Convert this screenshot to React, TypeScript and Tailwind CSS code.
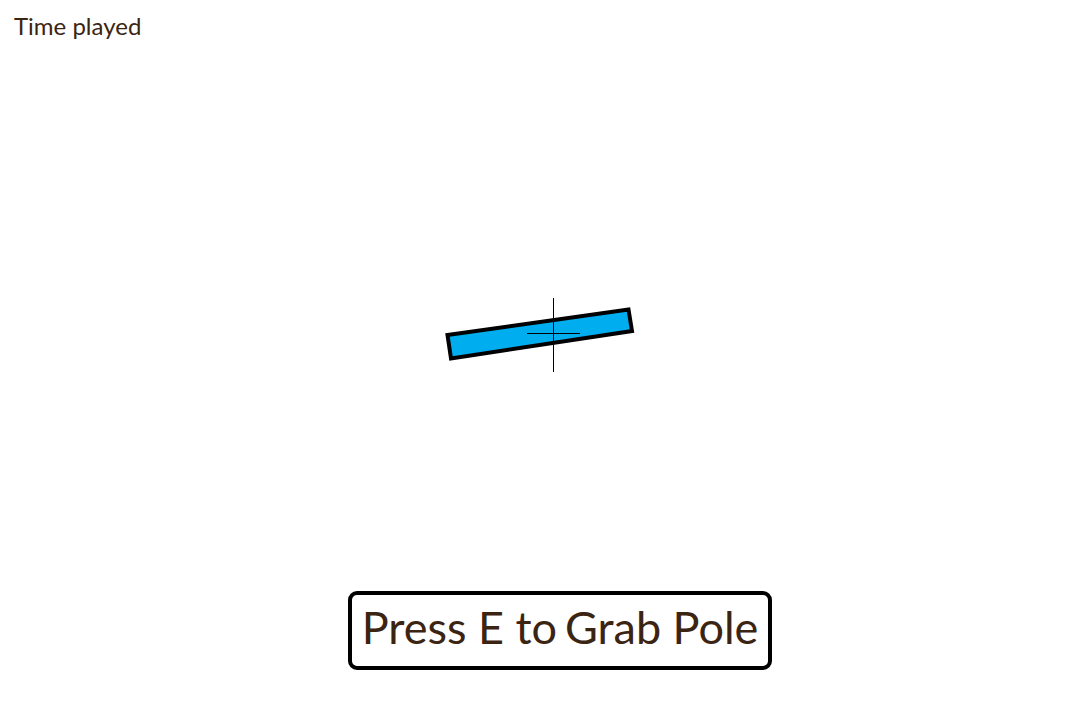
export default function App() {
  return (
    <div className="relative flex h-[720px] w-[1080px] flex-col overflow-hidden bg-white" style={{ fontFamily: 'Lato, "Open Sans", sans-serif' }}>
      {/* game world */}
      <svg className="absolute inset-0" width="1080" height="720" viewBox="0 0 1080 720">
        <polygon points="447.5,335 628.5,309.5 632,331 451,358.5" fill="#00aeef" stroke="#000" strokeWidth="4" strokeLinejoin="miter" />
        <line x1="553.5" y1="298" x2="553.5" y2="372" stroke="#000" strokeWidth="1" />
        <line x1="527" y1="333.5" x2="580" y2="333.5" stroke="#000" strokeWidth="1" />
      </svg>

      <div className="relative whitespace-nowrap pl-[14px] pt-[10px] text-[24px] leading-[32px] text-[#3b2412]">Time played</div>

      <div className="relative mt-auto mb-[50px] ml-[348px] flex h-[79px] w-[424px] items-center justify-center gap-[8px] whitespace-nowrap rounded-[9px] border-[4px] border-black bg-white pb-[6px] text-[45px] leading-none text-[#3b2412]">
        <span>Press E to</span>
        <span>Grab Pole</span>
      </div>
    </div>
  );
}
